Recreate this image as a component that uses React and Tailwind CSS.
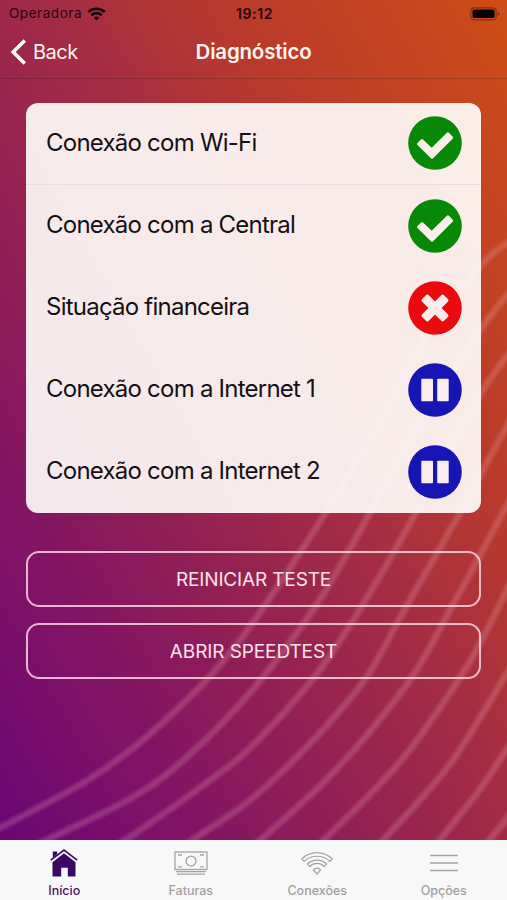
import React from "react";

const steps = [
  { name: "Conexão com Wi-Fi", status: "ok" },
  { name: "Conexão com a Central", status: "ok" },
  { name: "Situação financeira", status: "error" },
  { name: "Conexão com a Internet 1", status: "waiting" },
  { name: "Conexão com a Internet 2", status: "waiting" },
];

const waves = [
  [[-20, 838], [0, 828], [83, 783], [133, 748], [173, 713], [213, 673], [254, 621], [321, 520], [375, 430], [430, 330], [483, 263], [520, 234]],
  [[30, 848], [53, 837], [133, 797], [187, 757], [254, 688], [317, 604], [366, 520], [425, 415], [483, 326], [520, 280]],
  [[108, 850], [130, 837], [213, 778], [254, 744], [316, 675], [362, 606], [412, 520], [450, 448], [483, 390], [520, 338]],
  [[180, 849], [197, 837], [254, 797], [316, 737], [366, 678], [406, 607], [456, 520], [483, 470], [520, 402]],
  [[250, 849], [264, 837], [321, 785], [367, 735], [414, 674], [454, 603], [499, 520], [520, 480]],
  [[315, 849], [327, 837], [400, 762], [461, 676], [491, 622], [520, 562]],
  [[375, 849], [386, 837], [450, 764], [507, 673], [520, 652]],
  [[432, 849], [442, 837], [478, 792], [507, 749], [520, 728]],
  [[480, 851], [492, 837], [507, 818], [520, 800]],
];

// smooth curve through every point
const toPath = (pts) => {
  let d = `M${pts[0][0]} ${pts[0][1]}`;
  for (let i = 0; i < pts.length - 1; i++) {
    const a = pts[i - 1] || pts[i];
    const b = pts[i];
    const c = pts[i + 1];
    const e = pts[i + 2] || c;
    d += `C${b[0] + (c[0] - a[0]) / 6} ${b[1] + (c[1] - a[1]) / 6} ${
      c[0] - (e[0] - b[0]) / 6
    } ${c[1] - (e[1] - b[1]) / 6} ${c[0]} ${c[1]}`;
  }
  return d;
};

function Background() {
  return (
    <svg className="absolute inset-0 -z-10" width="507" height="900" viewBox="0 0 507 900">
      <g fill="none" stroke="#ffbed2" strokeOpacity="0.08">
        {waves.map((pts, i) => (
          <g key={i}>
            <path d={toPath(pts)} strokeWidth="9.5" />
            <path d={toPath(pts)} strokeWidth="6.5" />
            <path d={toPath(pts)} strokeWidth="3.5" />
          </g>
        ))}
      </g>
    </svg>
  );
}

function StatusIcon({ status }) {
  if (status === "ok") {
    return (
      <svg width="54" height="54" viewBox="0 0 54 54">
        <circle cx="27" cy="27" r="26.8" fill="#078807" />
        <path
          d="M10.5 28 14 24.5 23.7 33.8 39.9 17.8 43.6 21.8 24 41.3Z"
          fill="#fbefee"
          stroke="#fbefee"
          strokeWidth="3"
          strokeLinejoin="round"
        />
      </svg>
    );
  }
  if (status === "error") {
    return (
      <svg width="54" height="54" viewBox="0 0 54 54">
        <circle cx="27" cy="27" r="26.8" fill="#e90b0e" />
        <g fill="#fbecec" transform="rotate(45 27 27)">
          <rect x="11.5" y="22.3" width="31" height="9.4" rx="2" />
          <rect x="22.3" y="11.5" width="9.4" height="31" rx="2" />
        </g>
      </svg>
    );
  }
  return (
    <svg width="54" height="54" viewBox="0 0 54 54">
      <circle cx="27" cy="27" r="26.8" fill="#1715b4" />
      <g fill="#faebed">
        <rect x="13.3" y="15.7" width="11.7" height="22.6" rx="0.8" />
        <rect x="29.2" y="15.7" width="11.5" height="22.6" rx="0.8" />
      </g>
    </svg>
  );
}

function StatusBar() {
  return (
    <div className="grid h-[27px] grid-cols-3 items-center pl-[9px] pr-[7px] text-[13.5px] text-[#25060e]">
      <div className="flex items-center gap-[5px]">
        <span className="tracking-[0.55px]">Operadora</span>
        <svg width="19" height="14" viewBox="0 0 19 14">
          <g fill="none" stroke="#17050a" strokeWidth="2.7">
            <path d="M1.3 5.1C6 .6 13 .6 17.7 5.1" />
            <path d="M4.3 8.3c3-2.8 7.4-2.8 10.4 0" />
          </g>
          <path d="M9.5 13.6 6.6 10.7c1.6-1.5 4.2-1.5 5.8 0Z" fill="#17050a" />
        </svg>
      </div>
      <span className="text-center text-[14px] font-semibold tracking-[0.6px]">19:12</span>
      <svg className="justify-self-end" width="30" height="14" viewBox="0 0 30 14">
        <rect x="0.8" y="0.8" width="25.4" height="12" rx="3.5" fill="none" stroke="#8a2c12" strokeWidth="1.2" />
        <rect x="2.5" y="2.5" width="22" height="8.6" rx="1.8" fill="#050202" />
        <path d="M27.7 5v4q1.7-.6 1.7-2t-1.7-2Z" fill="#8a2c12" />
      </svg>
    </div>
  );
}

function HouseIcon() {
  return (
    <svg width="28" height="28" viewBox="0 0 28 28" fill="#3b0764">
      <path d="M2.8 2.5h4.4v4L2.8 10Z" />
      <path d="M2.5 13.2 14 4.2l11.5 9v14.3h-7.7v-8.7h-6.6v8.7H2.5Z" />
      <path d="m1 11.8 13-10.3 13 10.3" fill="none" stroke="#f7f7f7" strokeWidth="2.6" />
      <path d="m.8 11.2 13.2-10.1 13.2 10.1" fill="none" stroke="#3b0764" strokeWidth="1.6" />
    </svg>
  );
}

function MoneyIcon() {
  return (
    <svg width="34" height="28" viewBox="0 0 34 28" fill="none" stroke="#a3a3a3" strokeWidth="1.3">
      <rect x="1" y="3" width="32" height="17.5" />
      <circle cx="17" cy="12" r="4.9" />
      <path d="M4 6h4M26 6h4M4 17.8h4M26 17.8h4M2 22.700h30M3 25.200h28" />
    </svg>
  );
}

function WifiIcon() {
  return (
    <svg width="32" height="28" viewBox="0 0 32 28" fill="none" stroke="#a3a3a3" strokeWidth="1.2" strokeLinejoin="round">
      <path d="M.8 10C9 1.500 23 1.500 31.200 10l-2.400 2.400C22 5.500 10 5.500 3.200 12.400Z" />
      <path d="M6.400 15c5.300-5.300 13.900-5.300 19.200 0l-2.400 2.500c-4-4.100-10.400-4.100-14.400 0Z" />
      <path d="M12.300 20.800c2-2.300 5.400-2.300 7.400 0L16 25Z" />
    </svg>
  );
}

function MenuIcon() {
  return (
    <svg width="28" height="28" viewBox="0 0 28 28" stroke="#a3a3a3" strokeWidth="1.5">
      <path d="M0 6.5h28M0 14h28M0 21.5h28" />
    </svg>
  );
}

const tabs = [
  { name: "Início", icon: <HouseIcon />, active: true },
  { name: "Faturas", icon: <MoneyIcon /> },
  { name: "Conexões", icon: <WifiIcon /> },
  { name: "Opções", icon: <MenuIcon /> },
];

function App() {
  return (
    <div className="relative isolate flex h-[900px] w-[507px] flex-col overflow-hidden bg-[linear-gradient(to_top_right,#6a0376_0%,#6e0774_5%,#a02a48_52%,#b93a2c_72%,#cf4d16_100%)] font-['Inter','Liberation_Sans',sans-serif]">
      <Background />
      <StatusBar />

      <header className="grid h-[52px] grid-cols-3 items-center border-b border-black/15 px-[10px] pb-px text-[#fff2f2]">
        <button className="flex items-center gap-[6px] text-left">
          <svg width="17" height="26" viewBox="0 0 17 26" fill="none" stroke="white" strokeWidth="3.6">
            <path d="M14.8 1.5 3.2 13l11.6 11.5" />
          </svg>
          <span className="text-[20px] tracking-[-0.5px]">Back</span>
        </button>
        <h1 className="text-center text-[20.5px] font-semibold tracking-[-0.2px]">Diagnóstico</h1>
      </header>

      <main className="flex flex-1 flex-col px-[26px] pt-6">
        <ul className="overflow-hidden rounded-xl bg-[#fffdfb]/91">
          {steps.map((step, i) => (
            <li
              key={step.name}
              className={`flex h-[82px] items-center justify-between pb-px pl-[20px] pr-[19.5px] ${
                i === 0 ? "border-b border-[#eadcdf]" : ""
              }`}
            >
              <span className="pb-px text-[24px] tracking-[-0.77px] text-[#151012]">{step.name}</span>
              <StatusIcon status={step.status} />
            </li>
          ))}
        </ul>

        <div className="mt-[38px] flex flex-col gap-4">
          <button className="h-14 rounded-[13px] border-2 border-[#ffe0ea]/80 pt-[3px] text-[19px] tracking-[-0.15px] text-[#fbe3ea]">
            REINICIAR TESTE
          </button>
          <button className="h-14 rounded-[13px] border-2 border-[#ffe0ea]/80 pt-[3px] text-[19px] tracking-[-0.1px] text-[#fbe3ea]">
            ABRIR SPEEDTEST
          </button>
        </div>
      </main>

      <nav className="grid h-[60px] grid-cols-4 bg-[#f8f8f8] pl-px">
        {tabs.map((tab) => (
          <button
            key={tab.name}
            className={`flex flex-col items-center pt-[9px] text-[12.5px] font-medium ${
              tab.active ? "text-[#4a1273]" : "text-[#a0a0a0]"
            }`}
          >
            {tab.icon}
            <span className="mt-[5px] leading-[18px]">{tab.name}</span>
          </button>
        ))}
      </nav>
    </div>
  );
}

export default App;
